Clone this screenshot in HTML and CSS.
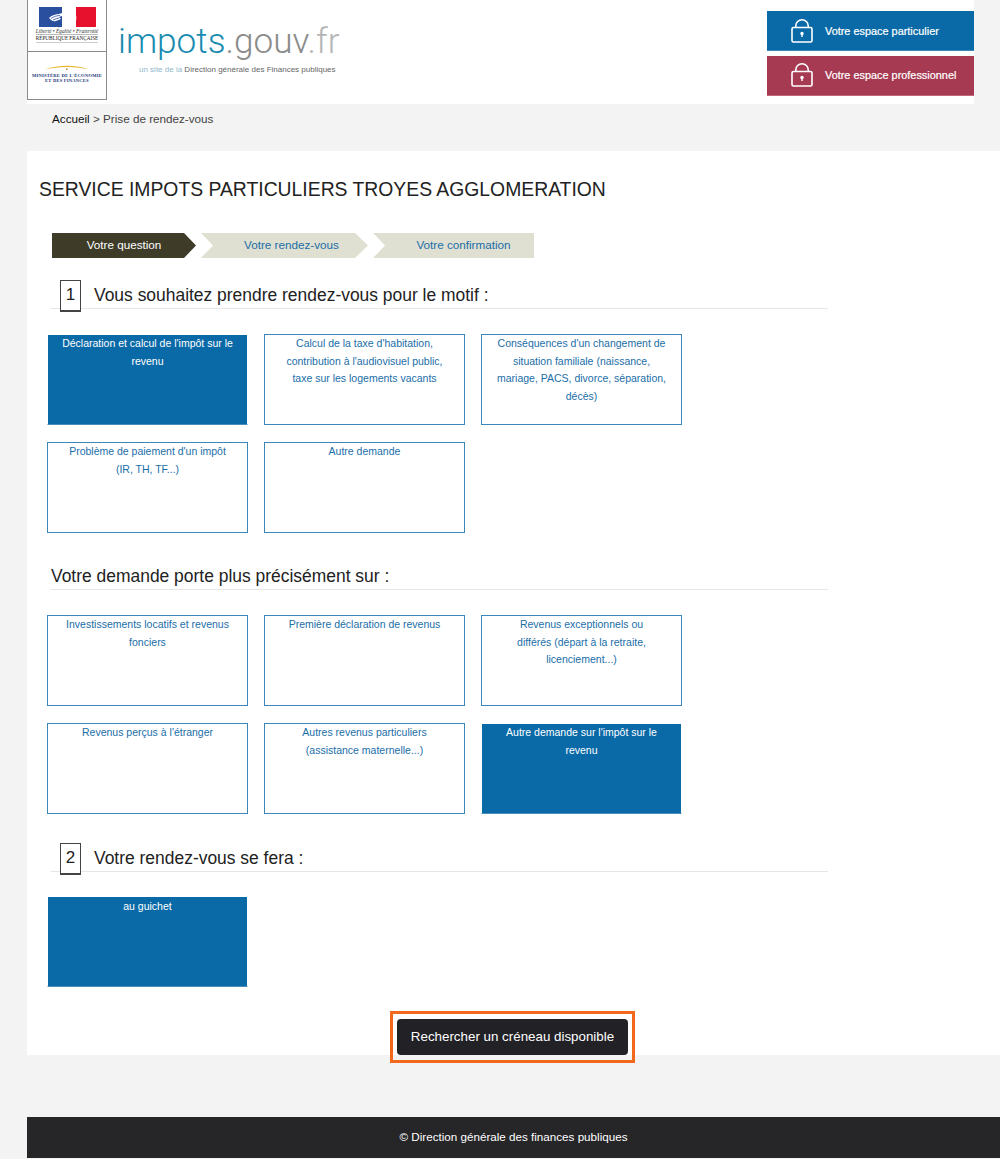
FILE: index.html
```html
<!DOCTYPE html>
<html lang="fr">
<head>
<meta charset="utf-8">
<title>Prise de rendez-vous</title>
<link rel="stylesheet" href="styles.css">
</head>
<body>
<svg class="defs" width="0" height="0" aria-hidden="true"><defs><g id="lock"><rect x="1" y="8.5" width="20" height="14.5" rx="1.5" fill="none" stroke="#fff" stroke-width="1.6"/><path d="M4.8 8.5V6.7a6.2 5.900 0 0 1 12.400 0v1.800" fill="none" stroke="#fff" stroke-width="1.6"/><circle cx="11" cy="14.5" r="1.7" fill="#fff"/><rect x="10.3" y="15" width="1.4" height="3" fill="#fff"/></g></defs></svg>
<header class="header">
  <div class="marks">
    <div class="mark mark-rf">
      <svg class="flag" viewBox="0 0 57 20" width="57" height="20" aria-hidden="true">
        <rect width="23" height="20" fill="#2a4f9e"/>
        <rect x="37" width="20" height="20" fill="#e8112d"/>
        <path d="M10 11c3-3 7-4 10-4l3-1 0 3-3 1 2 2-5 2c-3 1-5-1-7-3z" fill="#fff"/>
        <path d="M12 11.500c3-2 6-3 9-3M14 13c2-1 4-1.500 6-2" stroke="#2a4f9e" stroke-width=".8" fill="none"/>
        <path d="M37 8c1 3 0 7-2 9l2 3h-3l3-3z" fill="#fff"/>
      </svg>
      <div class="motto">Liberté • Égalité • Fraternité</div>
      <div class="rf">République Française</div>
    </div>
    <div class="mark mark-min">
      <svg class="arc" viewBox="0 0 44 6" width="44" height="6" aria-hidden="true"><path d="M0 5.500C12 .5 32 .5 44 5.500 32 2 12 2 0 5.500z" fill="#e9b92f"/><rect x="21" y="4.500" width="1.500" height="1.500" fill="#b98f22"/></svg>
      <div class="min">Ministère de l'Économie</div>
      <div class="min min-2">et des Finances</div>
    </div>
  </div>
  <div class="brand">
    <div class="wordmark"><span class="wm-a">impots</span><span class="wm-b">.gouv</span><span class="wm-c">.fr</span></div>
    <div class="tagline"><span class="tag-a">un site de la</span> Direction générale des Finances publiques</div>
  </div>
  <nav class="spaces">
    <a class="space space-blue"><svg class="lock" viewBox="0 0 22 24" width="22" height="24" aria-hidden="true"><use href="#lock"/></svg><span>Votre espace particulier</span></a>
    <a class="space space-red"><svg class="lock" viewBox="0 0 22 24" width="22" height="24" aria-hidden="true"><use href="#lock"/></svg><span>Votre espace professionnel</span></a>
  </nav>
</header>

<div class="crumbs"><a>Accueil</a> &gt; Prise de rendez-vous</div>

<main class="main">
  <h1 class="title">SERVICE IMPOTS PARTICULIERS TROYES AGGLOMERATION</h1>
  <ol class="steps">
    <li class="step step-1">Votre question</li>
    <li class="step step-2">Votre rendez-vous</li>
    <li class="step step-3">Votre confirmation</li>
  </ol>

  <h2 class="heading heading-num"><span class="num">1</span>Vous souhaitez prendre rendez-vous pour le motif :</h2>
  <div class="cards">
    <div class="card on">Déclaration et calcul de l'impôt sur le revenu</div>
    <div class="card">Calcul de la taxe d'habitation, contribution à l'audiovisuel public, taxe sur les logements vacants</div>
    <div class="card">Conséquences d'un changement de situation familiale (naissance, mariage, PACS, divorce, séparation, décès)</div>
    <div class="card">Problème de paiement d'un impôt<br>(IR, TH, TF...)</div>
    <div class="card">Autre demande</div>
  </div>

  <h2 class="heading heading-plain">Votre demande porte plus précisément sur :</h2>
  <div class="cards">
    <div class="card">Investissements locatifs et revenus fonciers</div>
    <div class="card">Première déclaration de revenus</div>
    <div class="card">Revenus exceptionnels ou<br>différés (départ à la retraite, licenciement...)</div>
    <div class="card">Revenus perçus à l'étranger</div>
    <div class="card">Autres revenus particuliers<br>(assistance maternelle...)</div>
    <div class="card on">Autre demande sur l'impôt sur le revenu</div>
  </div>

  <h2 class="heading heading-num heading-second"><span class="num">2</span>Votre rendez-vous se fera :</h2>
  <div class="cards cards-last">
    <div class="card on">au guichet</div>
  </div>

  <div class="action"><button class="search" type="button">Rechercher un créneau disponible</button></div>
</main>

<footer class="footer">© Direction générale des finances publiques</footer>
</body>
</html>
```
FILE: styles.css
```css
* { box-sizing: border-box; }
html, body { margin: 0; padding: 0; }
body {
  background: #f3f3f3;
  font-family: "Liberation Sans", Arial, sans-serif;
  color: #222;
  height: 1159px;
  overflow: hidden;
}
.defs { position: absolute; }

.header {
  margin-left: 27px;
  width: 947px;
  height: 104px;
  background: #fff;
  display: flex;
}
.marks {
  width: 80px;
  height: 100px;
  border: 1px solid #8a8a8a;
  border-top: 0;
  display: flex;
  flex-direction: column;
  flex: none;
}
.mark { display: flex; flex-direction: column; align-items: center; }
.mark-rf { height: 52px; border-bottom: 1px solid #8a8a8a; padding-top: 7px; }
.mark-min { flex: 1; padding-top: 12px; }
.flag { display: block; }
.motto { font: italic 5.400px/6px "Liberation Serif", serif; margin-top: 1px; white-space: nowrap; color: #333; border-bottom: 1px solid #bbb; }
.rf { font: 5.200px/7px "Liberation Serif", serif; text-transform: uppercase; white-space: nowrap; color: #222; border-bottom: 1px solid #ccc; }
.arc { display: block; }
.min { font: bold 4.600px/5px "Liberation Serif", serif; text-transform: uppercase; text-align: center; color: #1d3a7a; letter-spacing: .2px; margin-top: 3px; white-space: nowrap; }
.min-2 { margin-top: 0; }

.brand { margin-left: 11px; padding-top: 16px; flex: none; width: 240px; }
.wordmark { font: 300 35.200px/50px Roboto, sans-serif; white-space: nowrap; }
.wm-a { color: #1a8bb0; }
.wm-b { color: #8b8b8b; }
.wm-c { color: #b5b5b5; }
.tagline { font-size: 8px; line-height: 10px; color: #666; margin-top: -1px; margin-left: 21px; white-space: nowrap; }
.tag-a { color: #8fb8cc; }

.spaces {
  margin-left: auto;
  padding-top: 11px;
  width: 207px;
  display: flex;
  flex-direction: column;
  gap: 5px;
}
.space {
  height: 40px;
  display: flex;
  align-items: center;
  padding-left: 24px;
  gap: 12px;
  color: #fff;
  font-size: 10.900px;
}
.space-blue { background: #0a6aa8; border-bottom: 1px solid #3b87b8; }
.space-red { background: #a63a52; border-bottom: 1px solid #c2687c; padding-bottom: 2px; }
.space span { -webkit-text-stroke: .2px #fff; }
.lock { flex: none; }

.crumbs {
  margin-left: 52px;
  height: 47px;
  padding-top: 8px;
  font-size: 11.700px;
  line-height: 14px;
  color: #444;
}
.crumbs a { color: #111; }

.main {
  margin-left: 27px;
  height: 904px;
  background: #fff;
  padding-left: 12px;
  position: relative;
}
.title {
  margin: 0;
  padding-top: 27px;
  font-size: 19.350px;
  line-height: 22px;
  font-weight: normal;
  color: #222;
}
.steps {
  list-style: none;
  margin: 33px 0 0 13px;
  padding: 0;
  display: flex;
  height: 25px;
  font-size: 11.700px;
  line-height: 23px;
  text-align: center;
}
.step { color: #1a6ea8; background: #e0e0d2; }
.step-1 {
  width: 144px;
  background: #3e3b28;
  color: #fff;
  clip-path: polygon(0 0, 132px 0, 100% 50%, 132px 100%, 0 100%);
}
.step-2 {
  width: 167px;
  margin-left: 5px;
  padding-left: 14px;
  clip-path: polygon(0 0, 154px 0, 100% 50%, 154px 100%, 0 100%, 12px 50%);
}
.step-3 {
  width: 161px;
  margin-left: 5px;
  padding-left: 20px;
  clip-path: polygon(0 0, 100% 0, 100% 100%, 0 100%, 12px 50%);
}

.heading {
  margin: 0 0 0 12px;
  width: 777px;
  font-size: 17.450px;
  font-weight: normal;
  color: #222;
  border-bottom: 1px solid #e6e6e6;
  line-height: 20px;
}
.heading-num {
  height: 26px;
  margin-top: 25px;
  padding-left: 43px;
  position: relative;
  padding-top: 2px;
}
.heading-plain { height: 24px; margin-top: 33px; padding-top: 0; }
.heading-second { margin-top: 32px; }
.num {
  position: absolute;
  left: 9px;
  top: -3px;
  width: 21px;
  height: 32px;
  border: 1px solid #444;
  border-bottom-width: 2px;
  background: #fff;
  text-align: center;
  line-height: 28px;
  font-size: 17px;
}

.cards {
  margin-top: 25px;
  margin-left: 8px;
  width: 652px;
  display: grid;
  grid-template-columns: repeat(3, 201px);
  column-gap: 16px;
  row-gap: 17px;
}
.cards-last { margin-top: 24px; }
.card {
  height: 91px;
  border: 1px solid #3b87b8;
  background: #fff;
  color: #1a6ea8;
  font-size: 10.500px;
  line-height: 17.500px;
  text-align: center;
  padding: 0 14px;
}
.card.on { background: #0a6aa8; color: #fff; border-color: #fff #fff #4a8fbb #fff; }
.cards-last .card { padding-top: 1px; }

.action {
  position: absolute;
  left: 363px;
  top: 860px;
  width: 245px;
  height: 52px;
  padding: 5px 4px;
  border: 3px solid #f2691c;
}
.search {
  display: block;
  width: 231px;
  height: 36px;
  background: #222226;
  color: #fff;
  border: 0;
  border-radius: 4px;
  padding: 0 0 2px;
  font: 13.350px "Liberation Sans", Arial, sans-serif;
}

.footer {
  margin: 62px 0 0 27px;
  height: 41px;
  background: #262629;
  color: #fff;
  font-size: 11.650px;
  line-height: 39px;
  text-align: center;
}
```
